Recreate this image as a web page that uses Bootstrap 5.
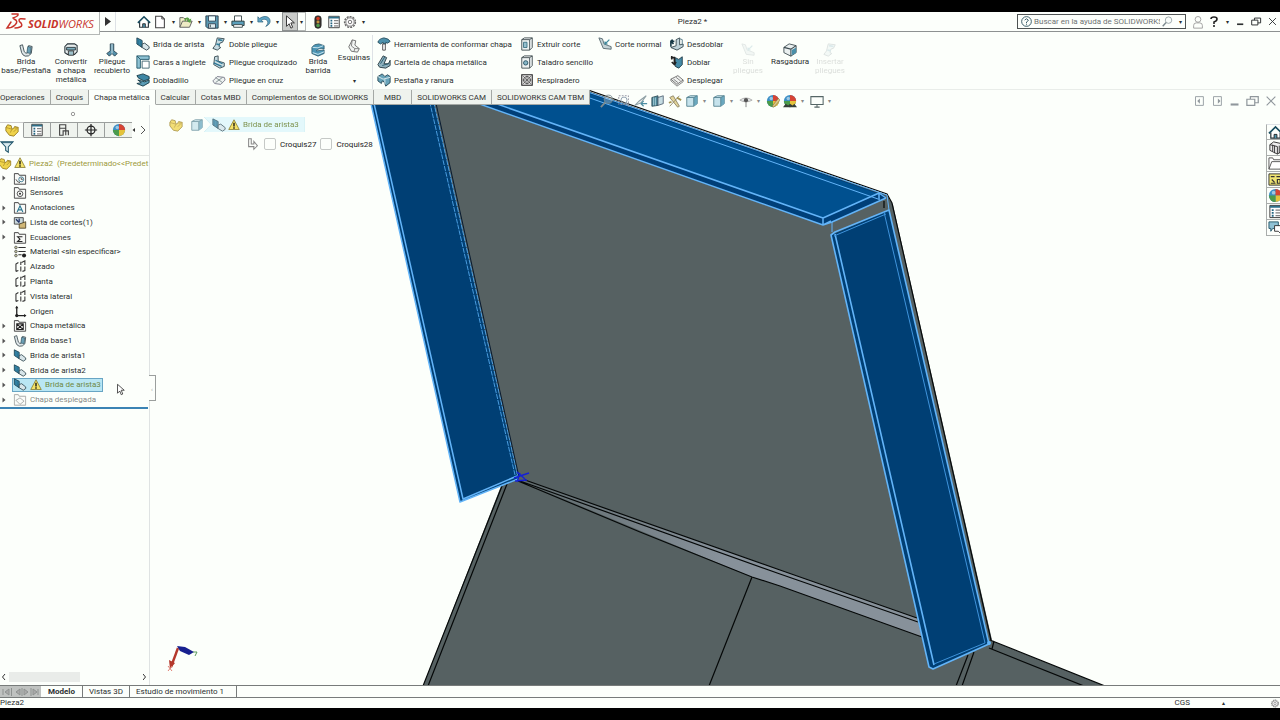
<!DOCTYPE html>
<html lang="es">
<head>
<meta charset="utf-8">
<meta name="viewport" content="width=device-width, initial-scale=1">
<title>Pieza2 - SOLIDWORKS</title>
<link href="https://cdn.jsdelivr.net/npm/bootstrap@5.3.0/dist/css/bootstrap.min.css" rel="stylesheet">
<style>
:root{--paper:#fcfffb;--ink:#2b2f30;--rule:#8d9191;--soft:#dfe3df}
body{font-family:Roboto,"Noto Sans",sans-serif;font-size:8px;line-height:9px;color:var(--ink);background:#000;padding:12px 0;overflow:hidden}
.app-shell{background:var(--paper);height:calc(100vh - 24px)}
button{font:inherit;color:inherit;background:none;border:0;padding:0}
.ic{width:14px;height:14px;flex:none;display:block}
.caret{width:10px;text-align:center;font-size:6px;line-height:14px;height:14px;flex:none}
/* title bar */
.title-bar{height:20px;border-bottom:1px solid var(--rule)}
.brand-box{width:100px;height:23px;background:var(--paper);border:1px solid #b4b8b6;border-top:0;border-left:0;z-index:2;margin-bottom:-4px}
.brand-box svg{width:100px;height:22px;display:block}
.quick{padding-left:20px}
.tool{width:16px;height:19px;display:flex;align-items:center;justify-content:center}
.arrow-tool{background:#c9cbc9;border:1px solid #8d9191}
.arrow-drop{border:1px solid #b4b8b6;border-left:0;height:19px;line-height:17px;width:8px}
.search-box{width:169px;height:15px;border:1px solid #4e5353;padding-left:3px;gap:2px}
.search-box input{border:0;outline:0;background:none;font:inherit;color:#666;padding:0;flex:1 1 auto;min-width:0}
.search-box input::placeholder{color:#6d7272;opacity:1}
/* ribbon */
.ribbon{height:58px;padding:3px 0 0 2px;border-bottom:1px solid #e9ede9}
.stack-col{display:grid;grid-template-rows:repeat(3,18px)}
.cmd{display:flex;align-items:center;gap:3px;white-space:nowrap;text-align:left}
.big{display:flex;flex-direction:column;align-items:center;padding-top:8px;text-align:center;white-space:nowrap}
.big.high{padding-top:4px}
.w-32{width:32px}.w-36{width:36px}.w-40{width:40px}.w-42{width:42px}.w-48{width:48px}
.w-60{width:60px}.w-72{width:72px}.w-76{width:76px}.w-78{width:78px}.w-88{width:88px}.w-148{width:148px}
.faded{opacity:.16}
/* work area */
.scene{inset:0;width:100%;height:100%}
.view-bar{height:15px;z-index:1}
.cm-tabs{height:15px}
.cm-tabs button{border:1px solid #a4a8a5;border-top:0;border-left:0;background:#eff3ee;padding:0 5px;white-space:nowrap;color:#333}
.cm-tabs button.wide{padding:0 10px}
.cm-tabs button.on{background:var(--paper);border-bottom-color:var(--paper)}
.hud{padding-left:10px}
.hud .ic{margin-right:3px}
.hud .caret{width:10px;color:#888;margin-right:3px}
.mdi{gap:4px;padding-right:2px}
.side{width:150px;border-right:1px solid #dfe3e3;background:var(--paper)}
.splitter{height:17px;padding-right:4px}
.side-tabs{height:16px}
.side-tabs button{width:27px;border:1px solid #9b9f9d;border-left:0;background:#eff3ee;display:flex;align-items:center;justify-content:center}
.side-tabs button.on{width:24px;background:var(--paper);border-bottom-color:var(--paper);border-top-color:#ccc}
.filter-row{height:18px;border-bottom:1px solid #e3e7e3}
.tree{display:grid;grid-auto-rows:1fr;height:251px;margin:0;padding:0;list-style:none;width:148px}
.tree li{display:flex;align-items:center;white-space:nowrap}
.tree .tw{width:13px;padding-left:2px;flex:none}
.tree .tw svg{display:block}
.tree .ic{width:14px;height:13px;margin-right:3px}
.tree .root-ic{margin-left:-2px;margin-right:2px}
.tree .warn{width:12px;height:12px}
.warn{width:12px;height:12px}
.olive{color:#9c9a3c}
.hit{background:#b9e6f3;border:1px solid #68a5c4;height:14px;margin-left:-1px;padding-right:1px;display:flex;align-items:center;color:#6f8a45}
.rollback{height:2px;width:148px;background:#3b83b4}
.hbar{height:12px;padding:0 2px;margin-bottom:2px}
.hbar span{width:71px;height:10px;background:#e9ece9;margin-left:3px}
.grip{left:149px;top:270px;width:7px;height:26px;border:1px solid #9b9f9d;border-left:0;background:var(--paper);color:#999;font-size:6px}
.crumbs{padding:12px 0 0 19px;gap:7px}
.crumb{height:15px;margin-left:-7px;color:#7f9450;filter:drop-shadow(0 0 0 #9fd6e2)}
.crumb-in{height:15px;background:#e3f8fb;padding:0 6px 0 8px;clip-path:polygon(0 0,100% 0,100% 100%,0 100%,7px 50%)}
.crumb-in .warn{margin:0 3px 0 2px}
.sketches{padding:5px 0 0 96px;color:#222}
.box-tick{appearance:none;width:12px;height:12px;border:1px solid #c5c9c6;border-radius:2px;margin:0 4px 0 0;background:var(--paper)}
.task{width:14px;padding-top:19px}
.task button{width:14px;height:16px;border:1px solid #a9adab;border-top:0;border-right:0;overflow:hidden;padding-left:1px;background:var(--paper);display:block}
.task .ic{width:15px;height:15px}
.pointer{left:116px;top:293px;width:9px;height:13px}
/* bottom */
.model-tabs{height:13px;border-top:1px solid #777b7a;border-bottom:1px solid #777b7a;background:var(--paper)}
.model-tabs button{border-right:1px solid #777b7a;padding:0 6px;line-height:10px}
.model-tabs .fw-bold{padding:0 7px}
.model-tabs .roomy{padding-right:12px}
.rec{background:#bfc2c0;width:41px}
.status{height:10px;line-height:10px}
.unit-gap{margin:0 34px 0 28px}
</style>
</head>
<body>
<svg class="d-none" aria-hidden="true">
<defs>
<symbol id="home" viewBox="0 0 16 16"><path d="M3 8v6h10V8" fill="#fff" stroke="#273238" stroke-width="1.3"/><path d="M1 9l7-7 7 7" fill="none" stroke="#174b5e" stroke-width="1.8"/><path d="M6.500 14v-4h3v4" fill="#4f95ae" stroke="#222"/></symbol>
<symbol id="page" viewBox="0 0 16 16"><path d="M3 1.500h7l3 3v10H3z" fill="#fff" stroke="#444" stroke-width="1.200"/><path d="M10 1.500v3h3" fill="none" stroke="#444"/></symbol>
<symbol id="open" viewBox="0 0 16 16"><path d="M1 14V3h4l1 1h4v3" fill="#f4f2c8" stroke="#555"/><path d="M1 14l3-7h11l-3 7z" fill="#eeebc4" stroke="#555"/><path d="M6 6c1-4 5-4 6-1l2-1-1 5-4-2 1.500-1C9 4 8 5 8 7z" fill="#59a345"/></symbol>
<symbol id="save" viewBox="0 0 16 16"><path d="M1 1h14v14H3l-2-2z" fill="#5a99b2" stroke="#263c47"/><path d="M4 1h8v6H4z" fill="#eff" stroke="#345"/><path d="M4 10h8v5H4z" fill="#dfecef" stroke="#345"/><path d="M6 11v3" stroke="#233"/></symbol>
<symbol id="print" viewBox="0 0 16 16"><path d="M4 7V1h8v6" fill="#fff" stroke="#344"/><path d="M1 7h14v5H1z" fill="#5ba0bb" stroke="#233"/><path d="M3 11h10v3H3z" fill="#fff" stroke="#344"/></symbol>
<symbol id="undo" viewBox="0 0 16 16"><path d="M1 2v6h6L5 6c3-2 6-1 7 1s0 4-2 6c5-2 6-6 4-9S7 1 3 4z" fill="#5fa6c6" stroke="#2b5f79" stroke-width=".8"/></symbol>
<symbol id="arrow" viewBox="0 0 12 16"><path d="M2 1v12l3-3 2 5 2-1-2-5h4z" fill="#fff" stroke="#222"/></symbol>
<symbol id="light" viewBox="0 0 16 16"><rect x="4.500" y="1" width="7" height="14" rx="3" fill="#3a3430" stroke="#222"/><circle cx="8" cy="4" r="2" fill="#d33b22"/><circle cx="8" cy="8" r="1.700" fill="#c4913d"/><circle cx="8" cy="12" r="2" fill="#4d9b4c"/></symbol>
<symbol id="list" viewBox="0 0 16 16"><path d="M2 1.500h12v13H2z" fill="#fff" stroke="#333"/><path d="M2 3h12" stroke="#2e718a" stroke-width="2"/><path d="M4 6.500h2M4 9.500h2M4 12.500h2" stroke="#236580" stroke-width="2"/><path d="M8 6.500h5M8 9.500h5M8 12.500h5" stroke="#555"/></symbol>
<symbol id="gear" viewBox="0 0 16 16"><circle cx="8" cy="8" r="6.200" fill="none" stroke="#666" stroke-width="1.600" stroke-dasharray="2.300 1.200"/><circle cx="8" cy="8" r="4.800" fill="#fff" stroke="#666"/><circle cx="8" cy="8" r="2" fill="none" stroke="#666"/></symbol>
<symbol id="lens" viewBox="0 0 16 16"><circle cx="9.500" cy="6" r="4.700" fill="#f3fafa" fill-opacity=".3" stroke="#7c8b8f"/><path d="M6 9.500L1 15" stroke="#7c8b8f" stroke-width="2"/></symbol>
<symbol id="user" viewBox="0 0 16 16"><circle cx="8" cy="5" r="3.300" fill="none" stroke="#999"/><path d="M3 15v-3q0-3 3-3h4q3 0 3 3v3z" fill="none" stroke="#999"/></symbol>
<symbol id="restore" viewBox="0 0 16 16"><path d="M1 6h9v7H1zM5 6V3h9v7h-4" fill="none" stroke="currentColor" stroke-width="1.400"/></symbol>
<symbol id="mini" viewBox="0 0 16 16"><path d="M3 12h9" stroke="currentColor" stroke-width="2.400"/></symbol>
<symbol id="close" viewBox="0 0 16 16"><path d="M3 3l10 10M13 3L3 13" stroke="currentColor" stroke-width="1.300"/></symbol>
<symbol id="dockl" viewBox="0 0 16 16"><path d="M4 3h9v10H4z" fill="none" stroke="currentColor"/><path d="M6 8l3-3v6z" fill="currentColor"/></symbol>
<symbol id="dockr" viewBox="0 0 16 16"><path d="M4 3h9v10H4z" fill="none" stroke="currentColor"/><path d="M12 8L9 5v6z" fill="currentColor"/></symbol>
<symbol id="base" viewBox="0 0 16 16"><path d="M1 3l3-1 2 8q2 3 4 1l1-8 4 1-1 8q-3 4-7 3-3-1-4-4z" fill="#dfe7e9" stroke="#37474e"/><path d="M10 4l4 1-1 7-4-1z" fill="#6aa0b6" stroke="#2a4a57" stroke-width=".7"/></symbol>
<symbol id="convert" viewBox="0 0 16 16"><path d="M1 4l3-3h8l3 2v7l-3 3H4l-3-2z" fill="#e7eded" stroke="#263238" stroke-width="1.200"/><path d="M3 5h10v3H3z" fill="#7fb0bf" stroke="#263238"/><path d="M5 9h6v5H5z" fill="#9dc1ca" stroke="#333"/></symbol>
<symbol id="loft" viewBox="0 0 16 16"><path d="M6 1h4v8l4 3-3 3-3-3-3 3-3-3 4-3z" fill="#5390aa" stroke="#2a4450"/><path d="M8 1v11" stroke="#e4eff2"/></symbol>
<symbol id="edge" viewBox="0 0 16 16"><path d="M1 1l6 3v8l-6-4z" fill="#388caf" stroke="#183c4b"/><path d="M7 8l3-1 5 4v2l-3 2-5-3z" fill="#d7e5e9" stroke="#2b414a"/><path d="M3 3v6M5 4v6" stroke="#245e76" stroke-width=".6"/></symbol>
<symbol id="miter" viewBox="0 0 16 16"><path d="M1 1h14v4H5v10H1z" fill="#8fc3d4" stroke="#1e5266"/><path d="M1 1l4 4" stroke="#1e5266"/><path d="M7 7h8v8H7z" fill="#fff" stroke="#3a5f6d"/></symbol>
<symbol id="hem" viewBox="0 0 16 16"><path d="M1 3l7-2 7 3v3l-6 2-6-3z" fill="#3e87a4" stroke="#173944"/><path d="M2 8l8 2 5-2v3l-7 4-7-3 5-1z" fill="#5b9db6" stroke="#173944"/></symbol>
<symbol id="jog" viewBox="0 0 16 16"><path d="M6 1l8 1-2 4-3 1-1 4 2 1-4 3-5-2 3-4z" fill="#c7dce2" stroke="#31464e"/><path d="M7 3l5 1M5 8l4 1" stroke="#357f9a" stroke-width="2"/></symbol>
<symbol id="sketchbend" viewBox="0 0 16 16"><path d="M3 2l4-1v6l7 2v4l-5 2-7-4z" fill="#c9dde2" stroke="#31464e"/><path d="M4 6l8 4M2 9l9 4" stroke="#2c7593" stroke-width="1.500"/></symbol>
<symbol id="cross" viewBox="0 0 16 16"><path d="M1 9l5-5 8 1 1 3-5 5-7-1z" fill="#eef2f1" stroke="#778"/><path d="M4 5l8 6M12 5l-8 6" stroke="#788"/></symbol>
<symbol id="swept" viewBox="0 0 16 16"><path d="M1 5q2-4 8-4l6 2v4q-6-2-9 2l9-1v4l-7 3-7-3z" fill="#4d96b5" stroke="#234c5d" stroke-width=".8"/><path d="M2 5q6 2 12-2M2 11l6 2 7-3" stroke="#d6edf5" fill="none"/></symbol>
<symbol id="corner" viewBox="0 0 16 16"><path d="M6 1l4 1-1 5 5 4-2 4-7-1-3-5z" fill="#f2f5f3" stroke="#666"/><path d="M6 1L5 8l4 3 5 0M9 11l-1 3" fill="none" stroke="#777"/></symbol>
<symbol id="forming" viewBox="0 0 16 16"><path d="M1 6q1-4 7-5 6 1 7 4l-3 2-2-1v2H7V6L4 8z" fill="#4d91ab" stroke="#20495a"/><path d="M6.500 8h3v7h-3z" fill="#fff" stroke="#444"/></symbol>
<symbol id="gusset" viewBox="0 0 16 16"><path d="M1 11l6-10 4 2-3 7 5 0 2-4v6l-5 3-7-1z" fill="#8fb2bf" stroke="#22363e"/><path d="M4 10l5-8M6 12l7-2" stroke="#24586b"/></symbol>
<symbol id="tabslot" viewBox="0 0 16 16"><path d="M1 4l5-3 3 3 3-2 3 2v7l-5 4-2-5-2-1-1 3-4-3z" fill="#67a3b9" stroke="#254654"/><path d="M1 4l6 3 8-2M9 7v6" stroke="#e2f0f4" fill="none"/></symbol>
<symbol id="cut" viewBox="0 0 16 16"><path d="M2 3l3-2h9v11l-3 3H2z" fill="#edf2f2" stroke="#3e4a4e"/><path d="M2 3h9v12M11 3l3-2" fill="none" stroke="#3e4a4e"/><path d="M4 6h4v6H4z" fill="#94bfce" stroke="#3c7082"/></symbol>
<symbol id="hole" viewBox="0 0 16 16"><path d="M2 3l3-2h9v11l-3 3H2z" fill="#edf2f2" stroke="#3e4a4e"/><path d="M2 3h9v12M11 3l3-2" fill="none" stroke="#3e4a4e"/><circle cx="6.500" cy="9" r="2.500" fill="#86b6c7" stroke="#234f60"/></symbol>
<symbol id="vent" viewBox="0 0 16 16"><path d="M2 2h12v12H2z" fill="#eee" stroke="#222" stroke-width="1.200"/><circle cx="8" cy="8" r="4" fill="none" stroke="#333"/><path d="M3 3l10 10M13 3L3 13M8 3v10M3 8h10" stroke="#555" stroke-width=".8"/></symbol>
<symbol id="normal" viewBox="0 0 16 16"><path d="M1 1l4 1 2 6 8 3v3l-9-1z" fill="#c4d2d6" stroke="#52666d"/><path d="M13 3L8 8M8 5v3h3" stroke="#40899d" fill="none" stroke-width="1.400"/></symbol>
<symbol id="unfold" viewBox="0 0 16 16"><path d="M7 3l4-2v8l4-1v3l-7 4-7-3 6-2z" fill="#bfd3d9" stroke="#33454c"/><path d="M1 11V5h4M3 3L1 5l3 3" stroke="#173946" fill="none" stroke-width="1.800"/><path d="M11 2l3 1v6" fill="none" stroke="#4d7482"/></symbol>
<symbol id="fold" viewBox="0 0 16 16"><path d="M6 3l4 2 4-3v9l-4 4-4-2z" fill="#448aa6" stroke="#1c3844"/><path d="M1 3h4v7M2 8l3 3 2-3M2 1v4" stroke="#222" fill="none" stroke-width="1.800"/></symbol>
<symbol id="flat" viewBox="0 0 16 16"><path d="M1 7l8-4 6 5-7 5z" fill="#f0f2f0" stroke="#666"/><path d="M4 7l5 4M7 5l5 4M1 7v2l7 6 7-5V8" fill="none" stroke="#777"/></symbol>
<symbol id="rip" viewBox="0 0 16 16"><path d="M1 5l6-4 8 2v8l-6 4-8-4z" fill="#eaf0f0" stroke="#3c4a4f"/><path d="M1 5l8 2 6-4M9 7v8" fill="none" stroke="#3c4a4f" stroke-width="1.200"/><path d="M10 8l5-3v6l-5 3z" fill="#4a90a9"/></symbol>
<symbol id="cube" viewBox="0 0 16 16"><path d="M2 4l4-2h8v9l-4 3H2z" fill="#c6e3ec" stroke="#52808f"/><path d="M10 4l4-2v9l-4 3z" fill="#6aa8be"/><path d="M2 4h8v10M10 4l4-2" fill="none" stroke="#52808f"/></symbol>
<symbol id="zoomarea" viewBox="0 0 16 16"><path d="M2 2h11v10H2z" fill="none" stroke="#889" stroke-dasharray="2 1.500"/><circle cx="8" cy="7" r="3.500" fill="none" stroke="#89a"/><path d="M10 10l4 4" stroke="#89a" stroke-width="2"/></symbol>
<symbol id="prev" viewBox="0 0 16 16"><path d="M1 13l7-3 6-8-8 6z" stroke="#8fa0a5" fill="#eef3f3" stroke-width="1.200"/><path d="M15 11H9M11 8l-3 3 3 3" stroke="#4d8ea3" fill="none" stroke-width="1.300"/></symbol>
<symbol id="section" viewBox="0 0 16 16"><path d="M1 4l7-2v11l-7 1z" fill="#4a8496" stroke="#35515c"/><path d="M8 4l6-2v9l-6 2z" fill="#c5dce2" stroke="#567"/><path d="M3 4v9M5 4v9" stroke="#acd4de"/></symbol>
<symbol id="wand" viewBox="0 0 16 16"><path d="M2 4l4-2 7 12-2 1zM13 2L2 14" fill="#e3d49a" stroke="#8a8266"/><path d="M10 4l5 3M4 9l-3 1" stroke="#a39451" stroke-width="2"/></symbol>
<symbol id="eye" viewBox="0 0 16 16"><path d="M1 7q7-5 14 0-7 4-14 0z" fill="#e6eaea" stroke="#aaa"/><circle cx="8" cy="7" r="2.400" fill="#555"/><path d="M8 9v6" stroke="#777"/></symbol>
<symbol id="ball" viewBox="0 0 16 16"><circle cx="8" cy="8" r="7" fill="#3b8fc6"/><path d="M8 8V1a7 7 0 0 1 7 7z" fill="#d74434"/><path d="M8 8h7a7 7 0 0 1-7 7z" fill="#e5c33b"/><path d="M8 8v7a7 7 0 0 1-7-7z" fill="#4c9b4a"/><circle cx="6" cy="5" r="2" fill="#fff" opacity=".5"/></symbol>
<symbol id="pencilball" viewBox="0 0 16 16"><use href="#ball"/><path d="M7 14l7-9 2 2-7 8z" fill="#dfc98a" stroke="#7e6e44" stroke-width=".7"/></symbol>
<symbol id="sceneball" viewBox="0 0 16 16"><use href="#ball"/><path d="M0 15l3-4 3 2 2-2 3 2 2-2 3 4z" fill="#373f38"/></symbol>
<symbol id="screen" viewBox="0 0 16 16"><path d="M1 3h14v9H1zM8 12v3M5 15h6" fill="none" stroke="#566" stroke-width="1.200"/></symbol>
<symbol id="part" viewBox="0 0 16 16"><path d="M1 5l2-3 4 1 1 4 2-1 1-2 4 1v5l-5 5-5-1-4-5z" fill="#efd34a" stroke="#94791d"/><path d="M1 5l3 1 4 1M8 7l-2 4M11 6l4-1M10 10l5-5" fill="none" stroke="#b2942c"/></symbol>
<symbol id="config" viewBox="0 0 16 16"><path d="M3 2h7v4H3zM3 6v8h4V9h3M10 9h3v5M10 6v8" fill="none" stroke="#444" stroke-width="1.300"/></symbol>
<symbol id="target" viewBox="0 0 16 16"><circle cx="8" cy="8" r="4.500" fill="none" stroke="#222" stroke-width="1.400"/><path d="M8 1v14M1 8h14" stroke="#222" stroke-width="1.400"/></symbol>
<symbol id="funnel" viewBox="0 0 16 16"><path d="M1 2h14L9.500 8v6l-3-2V8z" fill="#dcecf1" stroke="#20566b" stroke-width="1.200"/><path d="M2 3h12" stroke="#20566b"/></symbol>
<symbol id="warn" viewBox="0 0 16 16"><path d="M8 1l7 13H1z" fill="#f4e268" stroke="#837729"/><path d="M8 5v5M8 11v2" stroke="#111" stroke-width="1.800"/></symbol>
<symbol id="folder" viewBox="0 0 16 16"><path d="M1 15V2h5l1 2h8v11z" fill="#f8faf7" stroke="#444" stroke-width="1.200"/></symbol>
<symbol id="f-hist" viewBox="0 0 16 16"><use href="#folder"/><circle cx="9.500" cy="9" r="3" fill="none" stroke="#286b85"/><path d="M9.500 7v2h2M3 9l2 3 3 1" stroke="#333" fill="none"/></symbol>
<symbol id="f-sens" viewBox="0 0 16 16"><use href="#folder"/><circle cx="8" cy="9.500" r="3.500" fill="none" stroke="#333"/><circle cx="8" cy="9.500" r="1.300" fill="#333"/></symbol>
<symbol id="f-anno" viewBox="0 0 16 16"><use href="#folder"/><path d="M4.500 13.500L8 6l3.500 7.500M6 11h4" fill="none" stroke="#2a7690" stroke-width="1.400"/></symbol>
<symbol id="f-cut" viewBox="0 0 16 16"><path d="M1 2h11v8H1z" fill="#c9d7db" stroke="#333"/><path d="M3 4l4 4M7 3v5" stroke="#236" stroke-width="1.500"/><path d="M7 10l8-3v8H7z" fill="#d0b777" stroke="#453b20"/></symbol>
<symbol id="f-eq" viewBox="0 0 16 16"><use href="#folder"/><path d="M11 7H5l3 3-3 3h6" fill="none" stroke="#222" stroke-width="1.300"/></symbol>
<symbol id="f-mat" viewBox="0 0 16 16"><path d="M6 3h9M6 8h9M6 12h4" stroke="#333" stroke-width="1.300"/><circle cx="3" cy="3" r="1.600" fill="#c5c69b" stroke="#555"/><circle cx="3" cy="8" r="1.600" fill="#c5c69b" stroke="#555"/><circle cx="3" cy="13" r="1.600" fill="#c5c69b" stroke="#555"/><circle cx="13" cy="13" r="2.500" fill="#222"/></symbol>
<symbol id="plane" viewBox="0 0 16 16"><path d="M6 3L3 5v9M3 14l3-1M9 2v4M9 8v6M10 3l4-2v5M14 8v5l-3 1" fill="none" stroke="#333" stroke-width="1.300"/></symbol>
<symbol id="origin" viewBox="0 0 16 16"><path d="M4 2v11h11" fill="none" stroke="#222" stroke-width="1.600"/><path d="M2 4l2-3 2 3zM13 11l3 2-3 2z" fill="#222"/><circle cx="4" cy="13" r="2" fill="#222"/></symbol>
<symbol id="f-sheet" viewBox="0 0 16 16"><use href="#folder"/><path d="M4 6l8 7M12 6l-8 7M4 6h8v7H4z" fill="none" stroke="#222" stroke-width="1.300"/></symbol>
<symbol id="f-flat" viewBox="0 0 16 16"><g opacity=".45"><use href="#folder"/><path d="M3 9l5-3 5 4-5 4z" fill="none" stroke="#333"/></g></symbol>
<symbol id="twist" viewBox="0 0 4 6"><path d="M0.500 0.500v5L3.500 3z" fill="#555"/></symbol>
<symbol id="books" viewBox="0 0 16 16"><path d="M2 5l4-3 9 2v8l-5 3-8-4z" fill="#eee" stroke="#333"/><path d="M2 5l8 2v8M5 5v7M7 6v8M12 6v8M14 5v8" stroke="#333" fill="none"/></symbol>
<symbol id="fold2" viewBox="0 0 16 16"><path d="M1 14V2h4l1 2h8v3M1 14L4 6h12l-3 8z" fill="#fff" stroke="#555"/></symbol>
<symbol id="palette" viewBox="0 0 16 16"><path d="M1 2h14v12H1z" fill="#efe472" stroke="#333"/><path d="M3 5h4M9 5h4M4 8l3 3M3 12h5M10 8h3v4h-3z" stroke="#333" fill="none" stroke-width="1.300"/></symbol>
<symbol id="chat" viewBox="0 0 16 16"><path d="M1 2h10v7H5l-2 3V9H1z" fill="#8fc1d4" stroke="#24586b"/><path d="M7 6h9v6h-2v3l-3-3H7z" fill="#fff" stroke="#333"/></symbol>
<symbol id="hook" viewBox="0 0 16 16"><path d="M3 2h3v6h3V5l4 5-4 4v-3H3z" fill="none" stroke="#888" stroke-width="1.200"/></symbol>
</defs>
</svg>

<div class="app-shell d-flex flex-column overflow-hidden">
<header class="title-bar d-flex align-items-center position-relative">
  <div class="brand-box align-self-start position-relative">
    <svg viewBox="0 0 100 22" role="img" aria-label="SOLIDWORKS">
      <g fill="none" stroke="#c8342b" stroke-width="1.500" stroke-linecap="round"><path d="M12 2h6q1 2-5 4M14 7q5 2 1 6-3 3-8 3l4-6M25 7q-6-1-6 1 0 2 2 3 2 3-1 4-2 1-5 1"/></g>
      <text x="28" y="16" font-size="11" font-style="italic" fill="#c8342b" font-family="Open Sans"><tspan font-weight="700">SOLID</tspan><tspan>WORKS</tspan></text>
    </svg>
  </div>
  <button class="tool border-end" aria-label="Menú"><svg width="6" height="9"><path d="M0 0l6 4.500L0 9z" fill="#333"/></svg></button>
  <nav class="quick d-flex align-items-center" aria-label="Acceso rápido">
    <button class="tool" aria-label="Inicio"><svg class="ic"><use href="#home"/></svg></button>
    <button class="tool" aria-label="Nuevo"><svg class="ic"><use href="#page"/></svg></button><button class="caret" aria-label="Más">▾</button>
    <button class="tool" aria-label="Abrir"><svg class="ic"><use href="#open"/></svg></button><button class="caret" aria-label="Más">▾</button>
    <button class="tool" aria-label="Guardar"><svg class="ic"><use href="#save"/></svg></button><button class="caret" aria-label="Más">▾</button>
    <button class="tool" aria-label="Imprimir"><svg class="ic"><use href="#print"/></svg></button><button class="caret" aria-label="Más">▾</button>
    <button class="tool" aria-label="Deshacer"><svg class="ic"><use href="#undo"/></svg></button><button class="caret" aria-label="Más">▾</button>
    <button class="tool arrow-tool" aria-label="Seleccionar"><svg class="ic"><use href="#arrow"/></svg></button><button class="caret arrow-drop" aria-label="Más">▾</button>
    <button class="tool ms-1" aria-label="Reconstruir"><svg class="ic"><use href="#light"/></svg></button>
    <button class="tool" aria-label="Propiedades"><svg class="ic"><use href="#list"/></svg></button>
    <button class="tool" aria-label="Opciones"><svg class="ic"><use href="#gear"/></svg></button><button class="caret" aria-label="Más">▾</button>
  </nav>
  <div class="flex-grow-1 text-center">Pieza2 *</div>
  <div class="search-box d-flex align-items-center">
    <svg class="flex-shrink-0" width="11" height="11" viewBox="0 0 12 12"><circle cx="6" cy="6" r="5.300" fill="none" stroke="#2f5360"/><path d="M4 4.500q2-3 4 0 0 1-2 2V8M6 9v1" fill="none" stroke="#2f5360"/></svg>
    <input type="text" placeholder="Buscar en la ayuda de SOLIDWORKS" aria-label="Buscar en la ayuda">
    <svg class="flex-shrink-0" width="11" height="11"><use href="#lens"/></svg><button class="caret" aria-label="Opciones de búsqueda">▾</button>
  </div>
  <div class="d-flex align-items-center ps-1">
    <button class="tool" aria-label="Usuario"><svg class="ic"><use href="#user"/></svg></button>
    <button class="tool" aria-label="Ayuda"><svg width="8" height="11"><path d="M1 3q0-2 3-2t3 2q0 2-3 3v2M4 9v2" stroke="#222" stroke-width="1.600" fill="none"/></svg></button>
    <button class="caret" aria-label="Más">▾</button>
    <button class="tool" aria-label="Minimizar"><svg width="11" height="11"><use href="#mini"/></svg></button>
    <button class="tool" aria-label="Restaurar"><svg width="11" height="11"><use href="#restore"/></svg></button>
    <button class="tool" aria-label="Cerrar"><svg width="11" height="11"><use href="#close"/></svg></button>
  </div>
</header>

<section class="ribbon d-flex" aria-label="Chapa metálica">
  <button class="big w-48"><svg class="ic"><use href="#base"/></svg>Brida<br>base/Pestaña</button>
  <button class="big w-42"><svg class="ic"><use href="#convert"/></svg>Convertir<br>a chapa<br>metálica</button>
  <button class="big w-40"><svg class="ic"><use href="#loft"/></svg>Pliegue<br>recubierto</button>
  <div class="stack-col w-76 ms-1">
    <button class="cmd"><svg class="ic"><use href="#edge"/></svg>Brida de arista</button>
    <button class="cmd"><svg class="ic"><use href="#miter"/></svg>Caras a inglete</button>
    <button class="cmd"><svg class="ic"><use href="#hem"/></svg>Dobladillo</button>
  </div>
  <div class="stack-col w-88">
    <button class="cmd"><svg class="ic"><use href="#jog"/></svg>Doble pliegue</button>
    <button class="cmd"><svg class="ic"><use href="#sketchbend"/></svg>Pliegue croquizado</button>
    <button class="cmd"><svg class="ic"><use href="#cross"/></svg>Pliegue en cruz</button>
  </div>
  <button class="big w-36"><svg class="ic"><use href="#swept"/></svg>Brida<br>barrida</button>
  <button class="big high w-36"><svg class="ic"><use href="#corner"/></svg>Esquinas<span class="caret mt-2 pt-1">▾</span></button>
  <div class="stack-col w-148 border-start ps-1">
    <button class="cmd"><svg class="ic"><use href="#forming"/></svg>Herramienta de conformar chapa</button>
    <button class="cmd"><svg class="ic"><use href="#gusset"/></svg>Cartela de chapa metálica</button>
    <button class="cmd"><svg class="ic"><use href="#tabslot"/></svg>Pestaña y ranura</button>
  </div>
  <div class="stack-col w-78">
    <button class="cmd"><svg class="ic"><use href="#cut"/></svg>Extruir corte</button>
    <button class="cmd"><svg class="ic"><use href="#hole"/></svg>Taladro sencillo</button>
    <button class="cmd"><svg class="ic"><use href="#vent"/></svg>Respiradero</button>
  </div>
  <div class="stack-col w-72">
    <button class="cmd"><svg class="ic"><use href="#normal"/></svg>Corte normal</button>
  </div>
  <div class="stack-col w-60">
    <button class="cmd"><svg class="ic"><use href="#unfold"/></svg>Desdoblar</button>
    <button class="cmd"><svg class="ic"><use href="#fold"/></svg>Doblar</button>
    <button class="cmd"><svg class="ic"><use href="#flat"/></svg>Desplegar</button>
  </div>
  <button class="big w-36 faded" disabled><svg class="ic"><use href="#normal"/></svg>Sin<br>pliegues</button>
  <button class="big w-48"><svg class="ic"><use href="#rip"/></svg>Rasgadura</button>
  <button class="big w-32 faded" disabled><svg class="ic"><use href="#jog"/></svg>Insertar<br>pliegues</button>
</section>

<main class="flex-grow-1 position-relative d-flex flex-column">
  <svg class="scene position-absolute" viewBox="0 90 1280 595" preserveAspectRatio="xMidYMid slice" aria-label="Modelo de chapa metálica">
    <defs><linearGradient id="fillet"><stop offset="0" stop-color="#5d686a"/><stop offset=".5" stop-color="#87919a"/><stop offset="1" stop-color="#87919a"/></linearGradient></defs>
    <g fill="#566162">
      <path d="M501 486L423 686H1105L990 640 922 600 518 478z"/>
      <path d="M425 90H585L887 195 893 205 992 640 935 640 922 625 518 479z"/>
      <path d="M518 480L525 480 780 570 917 618 922 637 780 586 752 577z" fill="url(#fillet)"/>
    </g>
    <g fill="none" stroke="#050808" stroke-width="1.200">
      <path d="M502 486L423 686M507 484L428 686M525 480L780 570 917 618M520 481L780 574 918 622M518 481L640 532 752 577 780 586 922 637M752 577L709 686M968 655L956 686M974 652L962 686M990 640L1105 686M989 648L1084 686M994 641L992 649M588 90L887 194 892 203 991 640M884 201v7"/>
    </g>
    <g stroke-linejoin="round">
      <path d="M368 90L460 502 518 479 431 90z" fill="#003f74"/>
      <path d="M368 90L460 502 518 479M371 90L463 499 517 476" fill="none" stroke="#63b4f8" stroke-width="1.500"/>
      <path d="M427 90L515 475M431 90L518 477" fill="none" stroke="#4a9de0" stroke-dasharray="5 1"/>
      <path d="M433 90L519 477" stroke="#061a30"/>
      <path d="M440 90L823 225 832 222 886 198 884 195 584 90z" fill="#003f78"/>
      <path d="M457 90L823 218 879 194 584 92z" fill="#00508f"/>
      <path d="M440 90L823 225 832 222 886 198M457 90L823 218 879 193 886 198M823 218v7l8-4M879 193v7" fill="none" stroke="#63b4f8" stroke-width="1.500"/>
      <path d="M567 90L878 199M582 90L887 195 889 210M832 222v10" fill="none" stroke="#63b4f8"/>
      <path d="M831 235L889 210 989 644 933 669 929 667z" fill="#003f74"/>
      <path d="M831 235L835 232 889 210 989 644 933 669 929 667zM835 234L934 665" fill="none" stroke="#63b4f8" stroke-width="1.600"/>
      <path d="M834 236L886 214M884 212L985 643 934 664" fill="none" stroke="#3f93db"/>
      <circle cx="989" cy="643" r="2" fill="#63b4f8"/>
    </g>
    <path d="M514 478l15-5M517 472l8 7M515 481l12-1M520 473l-3 9" stroke="#1420d8" stroke-width="1.400"/>
    <path d="M178 648l-7 19" stroke="#b4382c" stroke-width="2.400"/><path d="M169 660l6 3-5 6z" fill="#b4382c"/><path d="M168 666l4 5M172 666l-4 5" stroke="#e08074"/>
    <path d="M177 646l8 1 9 5-5 3-9-4z" fill="#17208f"/><path d="M193 652l4 0-2 4" stroke="#5a9a5c" fill="none"/>
  </svg>

  <div class="view-bar d-flex align-items-start position-relative">
    <nav class="cm-tabs d-flex" aria-label="Administrador de comandos">
      <button class="ps-0">Operaciones</button><button>Croquis</button><button class="on">Chapa metálica</button><button>Calcular</button><button>Cotas MBD</button><button>Complementos de SOLIDWORKS</button><button class="wide">MBD</button><button>SOLIDWORKS CAM</button><button>SOLIDWORKS CAM TBM</button>
    </nav>
    <div class="hud d-flex align-items-center pt-1">
      <svg class="ic"><use href="#lens"/></svg><svg class="ic"><use href="#zoomarea"/></svg><svg class="ic"><use href="#prev"/></svg><svg class="ic"><use href="#section"/></svg><svg class="ic"><use href="#wand"/></svg>
      <svg class="ic me-0"><use href="#cube"/></svg><button class="caret" aria-label="Más">▾</button>
      <svg class="ic me-0"><use href="#cube"/></svg><button class="caret" aria-label="Más">▾</button>
      <svg class="ic me-0"><use href="#eye"/></svg><button class="caret" aria-label="Más">▾</button>
      <svg class="ic"><use href="#pencilball"/></svg>
      <svg class="ic me-0"><use href="#sceneball"/></svg><button class="caret" aria-label="Más">▾</button>
      <svg class="ic me-0"><use href="#screen"/></svg><button class="caret" aria-label="Más">▾</button>
    </div>
    <div class="mdi d-flex ms-auto text-secondary pt-1 opacity-75">
      <svg class="ic"><use href="#dockl"/></svg><svg class="ic"><use href="#dockr"/></svg><svg class="ic"><use href="#mini"/></svg><svg class="ic"><use href="#restore"/></svg><svg class="ic"><use href="#close"/></svg>
    </div>
  </div>

  <div class="flex-grow-1 d-flex position-relative">
    <aside class="side d-flex flex-column">
      <div class="splitter d-flex align-items-center justify-content-center"><svg width="6" height="8"><circle cx="3" cy="4" r="1.700" fill="none" stroke="#999"/></svg></div>
      <nav class="side-tabs d-flex" aria-label="Gestores">
        <button class="on" aria-label="Árbol"><svg class="ic"><use href="#part"/></svg></button><button aria-label="Propiedades"><svg class="ic"><use href="#list"/></svg></button><button aria-label="Configuraciones"><svg class="ic"><use href="#config"/></svg></button><button aria-label="Cotas"><svg class="ic"><use href="#target"/></svg></button><button class="border-end-0" aria-label="Apariencias"><svg class="ic"><use href="#ball"/></svg></button>
        <svg class="align-self-center" width="4" height="6"><path d="M3 1v4L0.500 3z" fill="#333"/></svg><svg class="align-self-center ms-1" width="7" height="10"><path d="M1 1l4 4-4 4" fill="none" stroke="#555"/></svg>
      </nav>
      <div class="filter-row d-flex align-items-center"><svg class="ic"><use href="#funnel"/></svg></div>
      <ul class="tree">
        <li class="olive"><svg class="ic root-ic"><use href="#part"/></svg><svg class="ic warn"><use href="#warn"/></svg>Pieza2&nbsp; (Predeterminado&lt;&lt;Predet</li>
        <li><span class="tw"><svg width="4" height="6"><use href="#twist"/></svg></span><svg class="ic"><use href="#f-hist"/></svg>Historial</li>
        <li><span class="tw"></span><svg class="ic"><use href="#f-sens"/></svg>Sensores</li>
        <li><span class="tw"><svg width="4" height="6"><use href="#twist"/></svg></span><svg class="ic"><use href="#f-anno"/></svg>Anotaciones</li>
        <li><span class="tw"><svg width="4" height="6"><use href="#twist"/></svg></span><svg class="ic"><use href="#f-cut"/></svg>Lista de cortes(1)</li>
        <li><span class="tw"><svg width="4" height="6"><use href="#twist"/></svg></span><svg class="ic"><use href="#f-eq"/></svg>Ecuaciones</li>
        <li><span class="tw"></span><svg class="ic"><use href="#f-mat"/></svg>Material &lt;sin especificar&gt;</li>
        <li><span class="tw"></span><svg class="ic"><use href="#plane"/></svg>Alzado</li>
        <li><span class="tw"></span><svg class="ic"><use href="#plane"/></svg>Planta</li>
        <li><span class="tw"></span><svg class="ic"><use href="#plane"/></svg>Vista lateral</li>
        <li><span class="tw"></span><svg class="ic"><use href="#origin"/></svg>Origen</li>
        <li><span class="tw"><svg width="4" height="6"><use href="#twist"/></svg></span><svg class="ic"><use href="#f-sheet"/></svg>Chapa metálica</li>
        <li><span class="tw"><svg width="4" height="6"><use href="#twist"/></svg></span><svg class="ic"><use href="#base"/></svg>Brida base1</li>
        <li><span class="tw"><svg width="4" height="6"><use href="#twist"/></svg></span><svg class="ic"><use href="#edge"/></svg>Brida de arista1</li>
        <li><span class="tw"><svg width="4" height="6"><use href="#twist"/></svg></span><svg class="ic"><use href="#edge"/></svg>Brida de arista2</li>
        <li><span class="tw"><svg width="4" height="6"><use href="#twist"/></svg></span><span class="hit"><svg class="ic"><use href="#edge"/></svg><svg class="ic warn"><use href="#warn"/></svg>Brida de arista3</span></li>
        <li><span class="tw"><svg width="4" height="6"><use href="#twist"/></svg></span><svg class="ic"><use href="#f-flat"/></svg><span class="text-black-50">Chapa desplegada</span></li>
      </ul>
      <div class="rollback"></div>
      <div class="hbar d-flex align-items-center mt-auto"><svg width="4" height="6"><path d="M3 0L0.500 3 3 6" fill="none" stroke="#333"/></svg><span></span><svg class="ms-auto" width="4" height="6"><path d="M0 0l2.500 3L0 6" fill="none" stroke="#333"/></svg></div>
      <button class="grip position-absolute" aria-label="Contraer panel">‹</button>
    </aside>
    <div class="flex-grow-1">
      <div class="crumbs d-flex align-items-center">
        <svg class="ic opacity-75"><use href="#part"/></svg><svg class="ic opacity-75"><use href="#cube"/></svg>
        <div class="crumb"><div class="crumb-in d-flex align-items-center"><svg class="ic opacity-75"><use href="#edge"/></svg><svg class="warn"><use href="#warn"/></svg>Brida de arista3</div></div>
      </div>
      <div class="sketches d-flex align-items-center">
        <svg class="ic"><use href="#hook"/></svg>
        <label class="d-flex align-items-center ms-1"><input class="box-tick" type="checkbox">Croquis27</label>
        <label class="d-flex align-items-center ms-1"><input class="box-tick" type="checkbox">Croquis28</label>
      </div>
    </div>
    <nav class="task" aria-label="Panel de tareas">
      <button class="border-top" aria-label="Recursos"><svg class="ic"><use href="#home"/></svg></button><button aria-label="Biblioteca"><svg class="ic"><use href="#books"/></svg></button><button aria-label="Explorador"><svg class="ic"><use href="#fold2"/></svg></button><button aria-label="Paleta"><svg class="ic"><use href="#palette"/></svg></button><button aria-label="Apariencias"><svg class="ic"><use href="#ball"/></svg></button><button aria-label="Propiedades"><svg class="ic"><use href="#list"/></svg></button><button aria-label="Foro"><svg class="ic"><use href="#chat"/></svg></button>
    </nav>
  </div>
  <svg class="pointer position-absolute" viewBox="0 0 12 16"><use href="#arrow"/></svg>
</main>

<nav class="model-tabs d-flex position-relative" aria-label="Vistas">
  <div class="rec d-flex align-items-center"><svg width="40" height="8"><path d="M3 1v6M9 1L5 4l4 3zM20 1l-4 3 4 3zM24 1l4 3-4 3zM33 1l4 3-4 3zM38 1v6M11.500 0v8M22 0v8M31 0v8" fill="#aaa" stroke="#8e9290"/></svg></div>
  <button class="fw-bold">Modelo</button><button>Vistas 3D</button><button class="roomy">Estudio de movimiento 1</button>
</nav>
<footer class="status d-flex align-items-center position-relative">
  <span>Pieza2</span><span class="ms-auto">CGS</span><span class="caret unit-gap">▴</span><svg class="ms-2" width="10" height="9"><use href="#gear"/></svg>
</footer>
</div>
<script src="https://cdn.jsdelivr.net/npm/bootstrap@5.3.0/dist/js/bootstrap.bundle.min.js"></script>
</body>
</html>
